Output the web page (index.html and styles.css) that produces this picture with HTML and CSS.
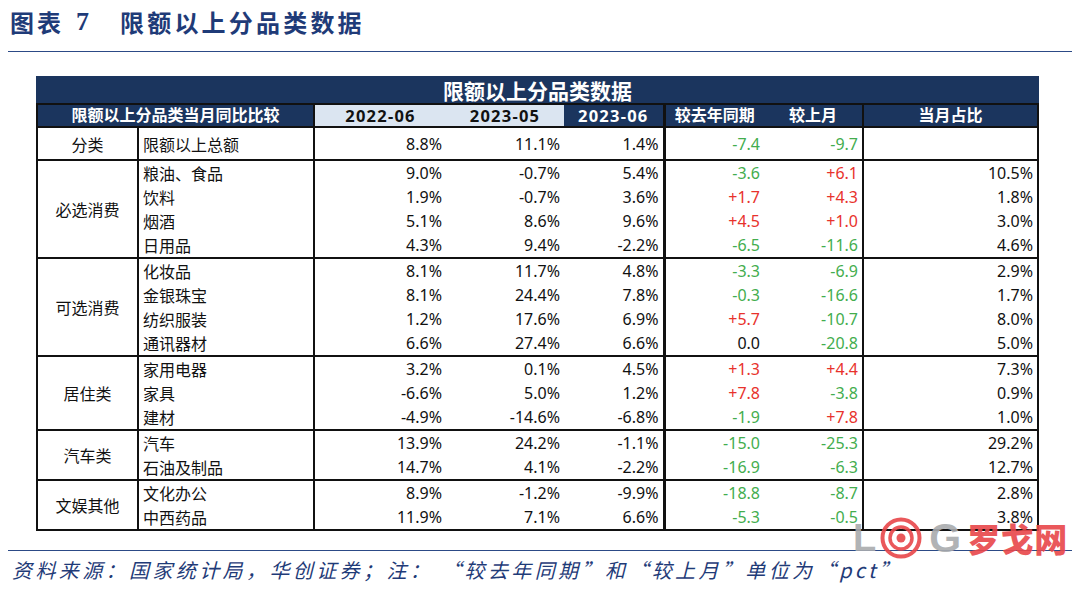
FILE: index.html
```html
<!DOCTYPE html>
<html lang="zh-CN">
<head>
<meta charset="utf-8">
<title>限额以上分品类数据</title>
<link rel="stylesheet" href="styles.css">
</head>
<body>
<div class="page">
  <div class="heading">
    <span class="h-lab">图表</span><span class="h-num">7</span><span class="h-title">限额以上分品类数据</span>
  </div>

  <div class="table-wrap">
    <table class="data">
      <colgroup>
        <col class="w1"><col class="w2"><col class="w3"><col class="w4"><col class="w5"><col class="w6"><col class="w7"><col class="w8">
      </colgroup>
      <thead>
        <tr class="title-row"><th colspan="8">限额以上分品类数据</th></tr>
        <tr class="head-row">
          <th colspan="2" class="b-r">限额以上分品类当月同比比较</th>
          <th class="lb date">2022-06</th>
          <th class="lb date">2023-05</th>
          <th class="date b-rr">2023-06</th>
          <th>较去年同期</th>
          <th class="b-r">较上月</th>
          <th>当月占比</th>
        </tr>
      </thead>
      <tbody class="grp">
        <tr class="tall">
          <td class="cat b-r">分类</td><td class="item b-r">限额以上总额</td>
          <td class="num">8.8%</td><td class="num">11.1%</td><td class="num b-rr">1.4%</td>
          <td class="num g">-7.4</td><td class="num g b-r">-9.7</td><td class="num"></td>
        </tr>
      </tbody>
      <tbody class="grp">
        <tr>
          <td class="cat b-r" rowspan="4">必选消费</td><td class="item b-r">粮油、食品</td>
          <td class="num">9.0%</td><td class="num">-0.7%</td><td class="num b-rr">5.4%</td>
          <td class="num g">-3.6</td><td class="num r b-r">+6.1</td><td class="num">10.5%</td>
        </tr>
        <tr>
          <td class="item b-r">饮料</td>
          <td class="num">1.9%</td><td class="num">-0.7%</td><td class="num b-rr">3.6%</td>
          <td class="num r">+1.7</td><td class="num r b-r">+4.3</td><td class="num">1.8%</td>
        </tr>
        <tr>
          <td class="item b-r">烟酒</td>
          <td class="num">5.1%</td><td class="num">8.6%</td><td class="num b-rr">9.6%</td>
          <td class="num r">+4.5</td><td class="num r b-r">+1.0</td><td class="num">3.0%</td>
        </tr>
        <tr>
          <td class="item b-r">日用品</td>
          <td class="num">4.3%</td><td class="num">9.4%</td><td class="num b-rr">-2.2%</td>
          <td class="num g">-6.5</td><td class="num g b-r">-11.6</td><td class="num">4.6%</td>
        </tr>
      </tbody>
      <tbody class="grp">
        <tr>
          <td class="cat b-r" rowspan="4">可选消费</td><td class="item b-r">化妆品</td>
          <td class="num">8.1%</td><td class="num">11.7%</td><td class="num b-rr">4.8%</td>
          <td class="num g">-3.3</td><td class="num g b-r">-6.9</td><td class="num">2.9%</td>
        </tr>
        <tr>
          <td class="item b-r">金银珠宝</td>
          <td class="num">8.1%</td><td class="num">24.4%</td><td class="num b-rr">7.8%</td>
          <td class="num g">-0.3</td><td class="num g b-r">-16.6</td><td class="num">1.7%</td>
        </tr>
        <tr>
          <td class="item b-r">纺织服装</td>
          <td class="num">1.2%</td><td class="num">17.6%</td><td class="num b-rr">6.9%</td>
          <td class="num r">+5.7</td><td class="num g b-r">-10.7</td><td class="num">8.0%</td>
        </tr>
        <tr>
          <td class="item b-r">通讯器材</td>
          <td class="num">6.6%</td><td class="num">27.4%</td><td class="num b-rr">6.6%</td>
          <td class="num">0.0</td><td class="num g b-r">-20.8</td><td class="num">5.0%</td>
        </tr>
      </tbody>
      <tbody class="grp">
        <tr>
          <td class="cat b-r" rowspan="3">居住类</td><td class="item b-r">家用电器</td>
          <td class="num">3.2%</td><td class="num">0.1%</td><td class="num b-rr">4.5%</td>
          <td class="num r">+1.3</td><td class="num r b-r">+4.4</td><td class="num">7.3%</td>
        </tr>
        <tr>
          <td class="item b-r">家具</td>
          <td class="num">-6.6%</td><td class="num">5.0%</td><td class="num b-rr">1.2%</td>
          <td class="num r">+7.8</td><td class="num g b-r">-3.8</td><td class="num">0.9%</td>
        </tr>
        <tr>
          <td class="item b-r">建材</td>
          <td class="num">-4.9%</td><td class="num">-14.6%</td><td class="num b-rr">-6.8%</td>
          <td class="num g">-1.9</td><td class="num r b-r">+7.8</td><td class="num">1.0%</td>
        </tr>
      </tbody>
      <tbody class="grp">
        <tr>
          <td class="cat b-r" rowspan="2">汽车类</td><td class="item b-r">汽车</td>
          <td class="num">13.9%</td><td class="num">24.2%</td><td class="num b-rr">-1.1%</td>
          <td class="num g">-15.0</td><td class="num g b-r">-25.3</td><td class="num">29.2%</td>
        </tr>
        <tr>
          <td class="item b-r">石油及制品</td>
          <td class="num">14.7%</td><td class="num">4.1%</td><td class="num b-rr">-2.2%</td>
          <td class="num g">-16.9</td><td class="num g b-r">-6.3</td><td class="num">12.7%</td>
        </tr>
      </tbody>
      <tbody class="grp">
        <tr>
          <td class="cat b-r" rowspan="2">文娱其他</td><td class="item b-r">文化办公</td>
          <td class="num">8.9%</td><td class="num">-1.2%</td><td class="num b-rr">-9.9%</td>
          <td class="num g">-18.8</td><td class="num g b-r">-8.7</td><td class="num">2.8%</td>
        </tr>
        <tr>
          <td class="item b-r">中西药品</td>
          <td class="num">11.9%</td><td class="num">7.1%</td><td class="num b-rr">6.6%</td>
          <td class="num g">-5.3</td><td class="num g b-r">-0.5</td><td class="num">3.8%</td>
        </tr>
      </tbody>
    </table>
  </div>

  <div class="source">资料来源：国家统计局，华创证券；注：&nbsp;“较去年同期”和“较上月”单位为“pct”</div>

  <div class="watermark">
    <span class="wm-l">L</span>
    <svg class="wm-o" width="42" height="42" viewBox="0 0 42 42">
      <circle cx="21" cy="21" r="18.5" fill="none" stroke="#e8474a" stroke-width="4"/>
      <circle cx="21" cy="21" r="11" fill="none" stroke="#e8474a" stroke-width="3.5"/>
      <circle cx="21" cy="21" r="4.5" fill="#e8474a"/>
    </svg>
    <span class="wm-g">G</span>
    <span class="wm-cn">罗戈网</span>
  </div>
</div>
</body>
</html>
```

FILE: styles.css
```css
html, body {
  margin: 0;
  padding: 0;
  background: #ffffff;
}

.page {
  position: relative;
  width: 1080px;
  height: 594px;
  font-family: "Noto Sans", "Noto Sans CJK SC", sans-serif;
  color: #111111;
}

.heading {
  margin: 0 8px;
  height: 52px;
  border-bottom: 1.5px solid #2c4a86;
  box-sizing: border-box;
  padding: 6px 0 0 2px;
  display: flex;
  align-items: flex-start;
  font-family: "Noto Sans CJK SC", sans-serif;
  font-weight: 700;
  color: #1f3b78;
  font-size: 24px;
  line-height: 31px;
}

.h-lab {
  letter-spacing: 3px;
}

.h-num {
  margin-left: 12px;
  font-family: "Liberation Serif", serif;
  font-size: 26px;
}

.h-title {
  margin-left: 31px;
  letter-spacing: 3.2px;
}

.table-wrap {
  margin: 24px 0 0 36px;
  width: 1001px;
}

.data {
  width: 1001px;
  border-collapse: collapse;
  table-layout: fixed;
  border: 2px solid #111111;
  font-size: 16px;
}

.w1 { width: 101px; }
.w2 { width: 176px; }
.w3 { width: 132px; }
.w4 { width: 118px; }
.w5 { width: 100px; }
.w6 { width: 100px; }
.w7 { width: 99px; }
.w8 { width: 175px; }

.title-row th {
  height: 25px;
  padding: 0;
  background: #1b355e;
  color: #ffffff;
  font-family: "Noto Sans CJK SC", sans-serif;
  font-weight: 700;
  font-size: 21px;
  line-height: 25px;
  border: 2px solid #1b355e;
  border-bottom: 2px solid #111111;
}

.head-row th {
  height: 21px;
  padding: 0;
  background: #1b355e;
  color: #ffffff;
  font-family: "Noto Sans", "Noto Sans CJK SC", sans-serif;
  font-weight: 700;
  font-size: 16px;
  line-height: 21px;
  border-top: 2px solid #111111;
  border-bottom: 2px solid #111111;
}

.head-row th.lb {
  background: #dbe5f1;
  color: #111111;
}

.head-row th.date {
  letter-spacing: 1.2px;
  font-size: 16.5px;
}

.b-r { border-right: 2px solid #111111; }
.b-rr { border-right: 3px solid #111111; }

.grp {
  border-top: 2px solid #111111;
}

.grp td {
  height: 24px;
  padding: 0 4px;
  line-height: 22px;
  white-space: nowrap;
}

.grp tr.tall td {
  height: 31px;
}

.cat {
  text-align: center;
  font-family: "Noto Sans CJK SC", sans-serif;
  vertical-align: middle;
}

.item {
  text-align: left;
  font-family: "Noto Sans CJK SC", sans-serif;
}

.num {
  text-align: right;
}

.g { color: #43ad4e; }
.r { color: #e8322c; }

.source {
  margin: 19px 8px 0;
  border-top: 1.5px solid #2c4a86;
  padding: 6px 0 0 4px;
  font-family: "Noto Sans CJK SC", sans-serif;
  font-style: italic;
  font-size: 20px;
  letter-spacing: 3.4px;
  line-height: 26px;
  color: #1f3b78;
}

.watermark {
  position: absolute;
  left: 853px;
  top: 517px;
  display: flex;
  align-items: center;
  height: 42px;
  opacity: 0.9;
}

.wm-l, .wm-g {
  font-family: "Liberation Sans", sans-serif;
  font-weight: 700;
  font-size: 38px;
  line-height: 42px;
  color: #a9abae;
}

.wm-g {
  font-size: 41px;
}

.wm-o {
  margin: 0 7px 0 4px;
}

.wm-cn {
  margin-left: 6px;
  font-family: "Noto Sans CJK SC", sans-serif;
  font-weight: 900;
  font-size: 33px;
  line-height: 42px;
  color: #e8474a;
  letter-spacing: 0.5px;
}
```
